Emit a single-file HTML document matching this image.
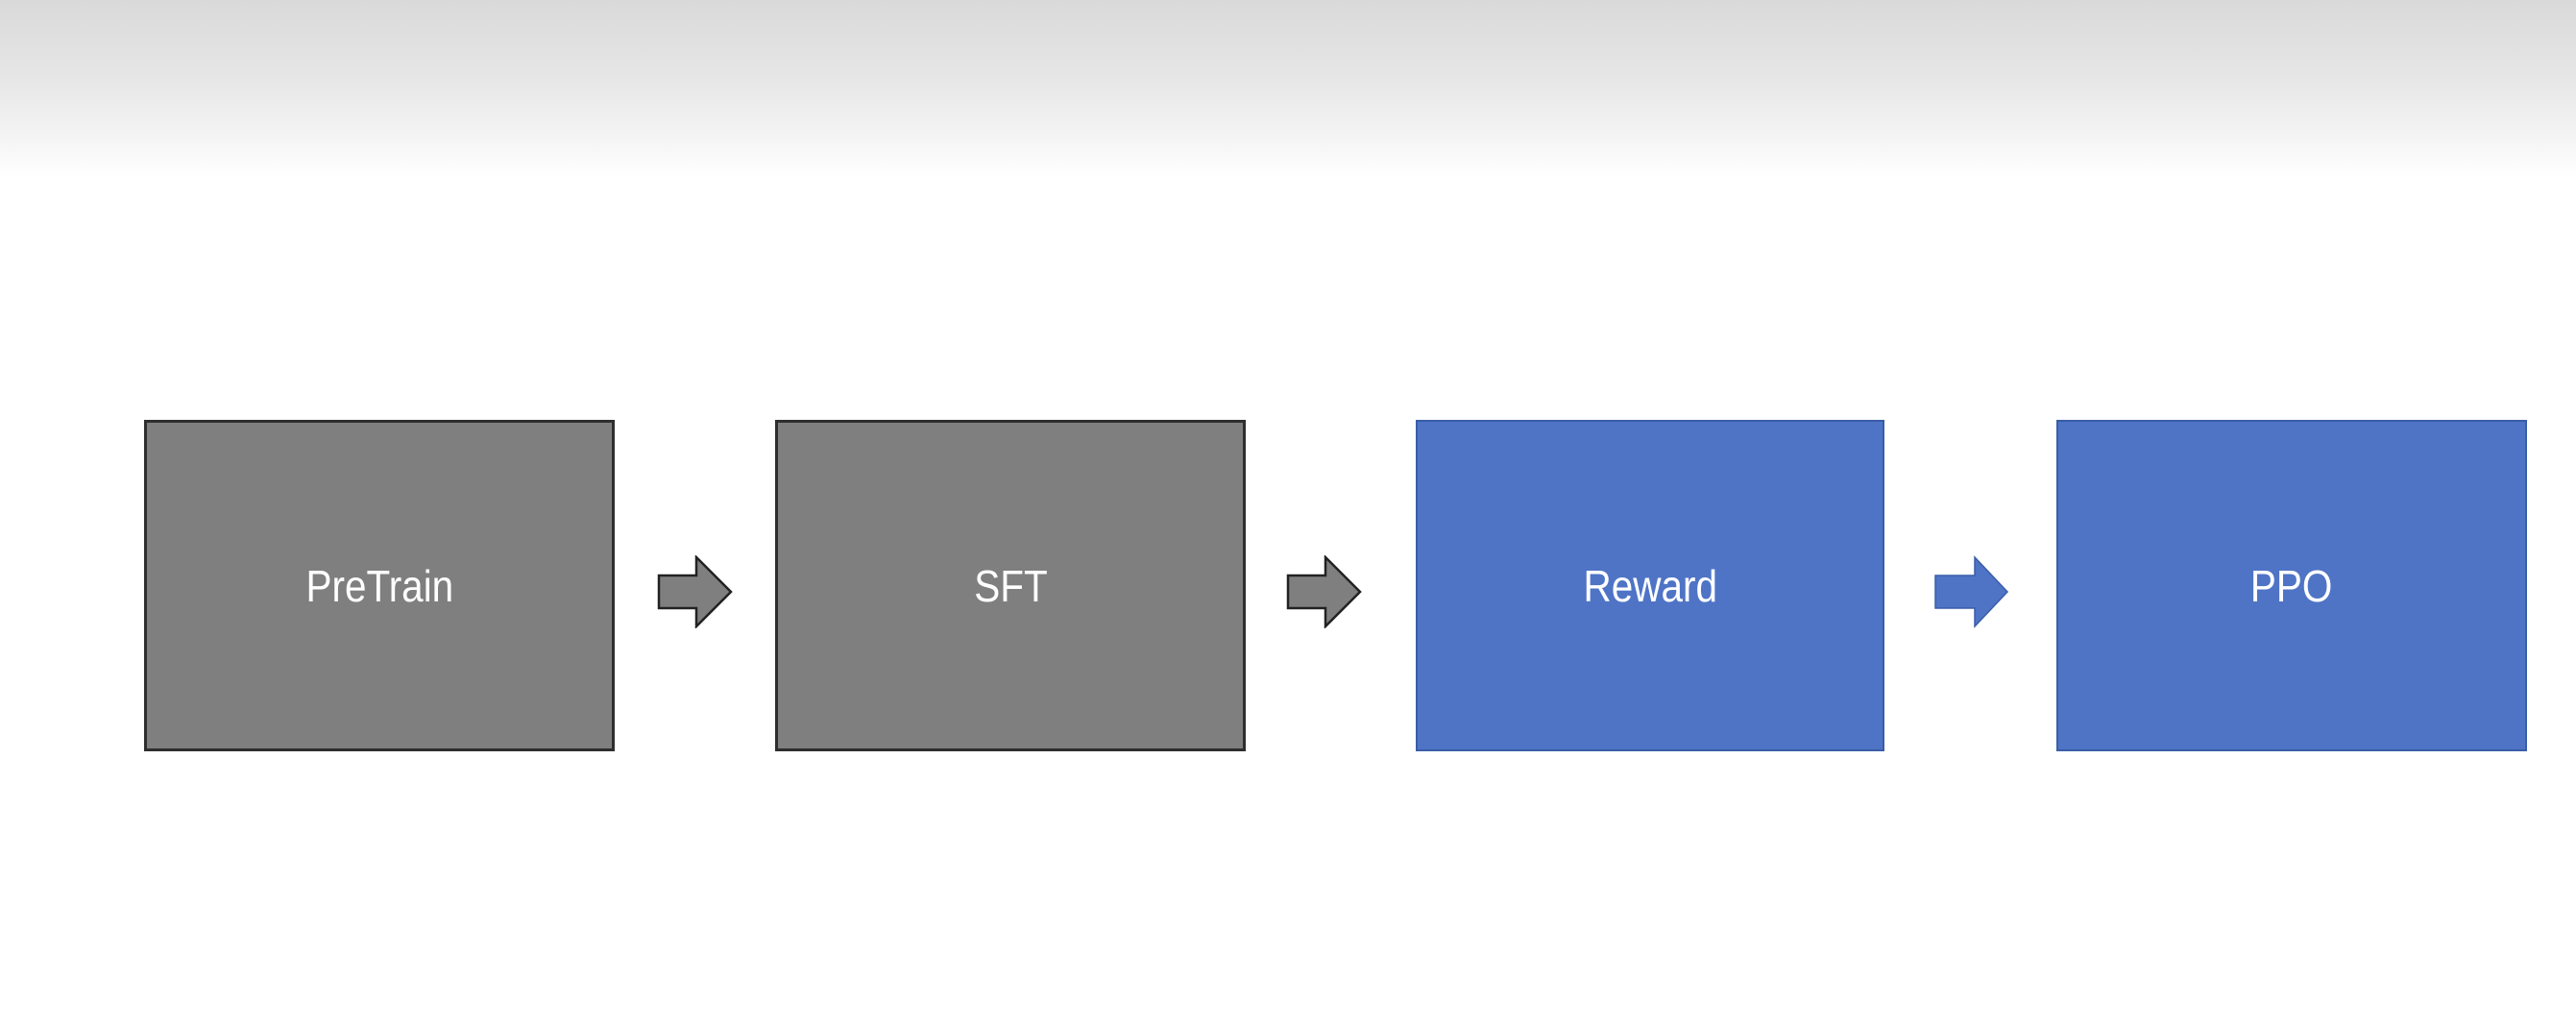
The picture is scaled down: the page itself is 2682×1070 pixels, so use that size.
<!DOCTYPE html>
<html><head><style>
html,body{margin:0;padding:0;}
body{width:2682px;height:1070px;position:relative;overflow:hidden;background:linear-gradient(#d9d9d9 0px,#e6e6e6 80px,#f6f6f6 150px,#fff 185px);font-family:"Liberation Sans",sans-serif;}
.b{position:absolute;top:437px;height:345px;box-sizing:border-box;color:#fff;font-size:46px;display:flex;align-items:center;justify-content:center;}
.b span{display:inline-block;transform:scaleX(0.88);}
.g{background:#7f7f7f;border:3px solid #2e2e2e;}
.bl{background:#4f74c6;border:2px solid #3a5da8;}
svg{position:absolute;}
</style></head><body>
<div class="b g" style="left:150px;width:490px;"><span>PreTrain</span></div>
<div class="b g" style="left:807px;width:490px;"><span>SFT</span></div>
<div class="b bl" style="left:1474px;width:488px;"><span>Reward</span></div>
<div class="b bl" style="left:2141px;width:490px;"><span>PPO</span></div>
<svg style="left:684px;top:578px" width="80" height="76"><polygon points="2,21 41,21 41,2 77,38 41,74 41,55 2,55" fill="#7f7f7f" stroke="#222" stroke-width="2.5"/></svg>
<svg style="left:1339px;top:578px" width="80" height="76"><polygon points="2,21 41,21 41,2 77,38 41,74 41,55 2,55" fill="#7f7f7f" stroke="#222" stroke-width="2.5"/></svg>
<svg style="left:2013px;top:578px" width="80" height="76"><polygon points="2,21 43,21 43,2 77,38 43,74 43,55 2,55" fill="#4f74c6" stroke="#3a5da8" stroke-width="1.5"/></svg>
</body></html>
